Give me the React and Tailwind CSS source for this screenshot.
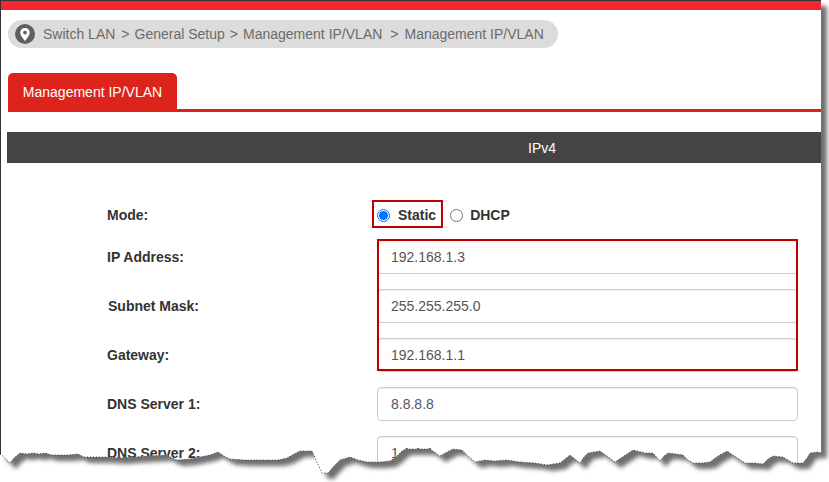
import React from 'react';

const EDGE = '0,454 4,457 10,463 14,458 20,453 27,454 33,453 39,454 45,453 52,455 60,455 68,455 78,454 84,457 90,457 100,457 107,457 120,458 133,457 150,456 167,455 172,458 177,460 190,459 200,457 210,455 218,452 224,456 230,459 245,460 267,460 278,460 287,458 294,454 300,451 312,451 316,460 322,473 328,473 334,466 340,460 350,457 358,460 367,462 380,462 390,461 396,457 402,451 407,449 420,449 430,449 440,456 447,452 453,449 462,450 468,456 475,462 485,460 495,461 507,460 520,462 535,463 547,465 560,463 570,455 575,459 580,463 584,457 588,453 600,451 607,456 615,462 624,456 633,450 645,453 653,453 660,461 664,456 668,453 676,454 683,455 688,460 693,463 702,463 710,462 718,456 727,451 736,457 745,463 755,463 763,464 768,459 773,456 783,457 793,463 803,463 807,458 810,453 818,452 821,453';
const OUTLINE = `0,0 821,0 821,453 ${EDGE.split(' ').reverse().join(' ')}`;

const fields = [
  { label: 'IP Address:', value: '192.168.1.3', labelClass: 'pl-[106px]' },
  { label: 'Subnet Mask:', value: '255.255.255.0', labelClass: 'pl-[107px]' },
  { label: 'Gateway:', value: '192.168.1.1', labelClass: 'pl-[106px]' },
  { label: 'DNS Server 1:', value: '8.8.8.8', labelClass: 'pl-[106px]' },
  { label: 'DNS Server 2:', value: '1.1.1.1', labelClass: 'pl-[106px]' },
];

function Field({ label, value, labelClass }) {
  return (
    <div className="flex items-center h-[34px] mb-[15px]">
      <label className={`w-[376px] shrink-0 text-[14px] font-bold text-[#333] ${labelClass}`}>{label}</label>
      <div className="w-[421px] h-[34px] shrink-0 flex items-center px-[13px] bg-white border border-[#ccc] rounded-[4px] shadow-[inset_0_1px_1px_rgba(0,0,0,0.075)] text-[14px] text-[#555]">
        {value}
      </div>
    </div>
  );
}

function Radio({ checked }) {
  return (
    <span className={`w-[13px] h-[13px] rounded-full flex items-center justify-center bg-white border ${checked ? 'border-[#0075ff]' : 'border-[#767676]'}`}>
      {checked && <span className="w-[9px] h-[9px] rounded-full bg-[#0075ff]" />}
    </span>
  );
}

export default function App() {
  return (
    <div className="relative w-[829px] h-[482px] overflow-hidden bg-white font-['Liberation_Sans',Arial,sans-serif]">
      <div className="w-[821px] h-[482px] border-l border-t border-[#333] overflow-hidden">
        <div className="h-[9px] bg-[#f4262f]" />

        {/* Breadcrumb */}
        <div className="ml-[7px] mt-[10px] w-[550px] h-[28px] flex items-center rounded-full bg-[#dcdcdc] pl-[7px] text-[14px] text-[#6b6b6b]">
          <span className="w-[20px] h-[20px] rounded-full bg-[#5f5f5f] flex items-center justify-center mr-[8px]">
            <svg width="10" height="13" viewBox="0 0 10 13">
              <path fillRule="evenodd" fill="#fff" d="M5 0C2.2 0 .3 2.1.3 4.7.3 7.8 5 13 5 13s4.7-5.2 4.7-8.3C9.700 2.100 7.800 0 5 0zm0 6.500a1.900 1.900 0 1 1 0-3.800 1.900 1.900 0 0 1 0 3.800z" />
            </svg>
          </span>
          <span>Switch LAN</span>
          <span className="ml-[6px] mr-[5px]">&gt;</span>
          <span>General Setup</span>
          <span className="ml-[5px] mr-[5px]">&gt;</span>
          <span>Management IP/VLAN</span>
          <span className="ml-[8px] mr-[6px]">&gt;</span>
          <span>Management IP/VLAN</span>
        </div>

        {/* Tabs */}
        <div className="mt-[25px] ml-[7px] h-[39px] border-b-[3px] border-[#dc241c] -mr-px">
          <div className="w-[169px] h-[39px] rounded-t-[5px] bg-[#dc241c] text-white text-[14px] flex items-center justify-center">
            Management IP/VLAN
          </div>
        </div>

        {/* Section header */}
        <div className="mt-[20px] ml-[6px] h-[31px] bg-[#444] text-white text-[14px] flex items-center pl-[521px] pt-[2px]">
          IPv4
        </div>

        {/* Form */}
        <div className="relative mt-[37px]">
          <div className="flex items-center h-[30px] mb-[10px]">
            <label className="w-[376px] shrink-0 pl-[106px] text-[14px] font-bold text-[#333]">Mode:</label>
            <div className="flex items-center text-[14px] font-bold text-[#333]">
              <Radio checked />
              <span className="ml-[8px] mr-[14px]">Static</span>
              <Radio />
              <span className="ml-[7px]">DHCP</span>
            </div>
          </div>
          {fields.map((field) => (
            <Field key={field.label} {...field} />
          ))}

          {/* Red annotation boxes */}
          <div className="absolute left-[371px] top-0 w-[71px] h-[28px] border-2 border-[#c00000]" />
          <div className="absolute left-[376px] top-[39px] w-[421px] h-[132px] border-2 border-[#c00000]" />
        </div>
      </div>

      {/* Torn paper edge and drop shadow */}
      <svg className="absolute inset-0 pointer-events-none" width="829" height="482" viewBox="0 0 829 482">
        <defs>
          <filter id="soft" x="-5%" y="-5%" width="110%" height="110%">
            <feGaussianBlur stdDeviation="2" />
          </filter>
          <clipPath id="outside">
            <path clipRule="evenodd" d={`M0 0H829V482H0Z M${OUTLINE.replace(/ /g, ' L')}Z`} />
          </clipPath>
        </defs>
        <polygon points={`0,482 0,454 ${EDGE} 829,453 829,482`} fill="#fff" />
        <g clipPath="url(#outside)">
          <polygon points={OUTLINE} fill="#707070" transform="translate(6 6)" filter="url(#soft)" />
        </g>
        <polyline points={EDGE} fill="none" stroke="#444" strokeWidth="1" strokeDasharray="1 2" />
      </svg>
    </div>
  );
}
